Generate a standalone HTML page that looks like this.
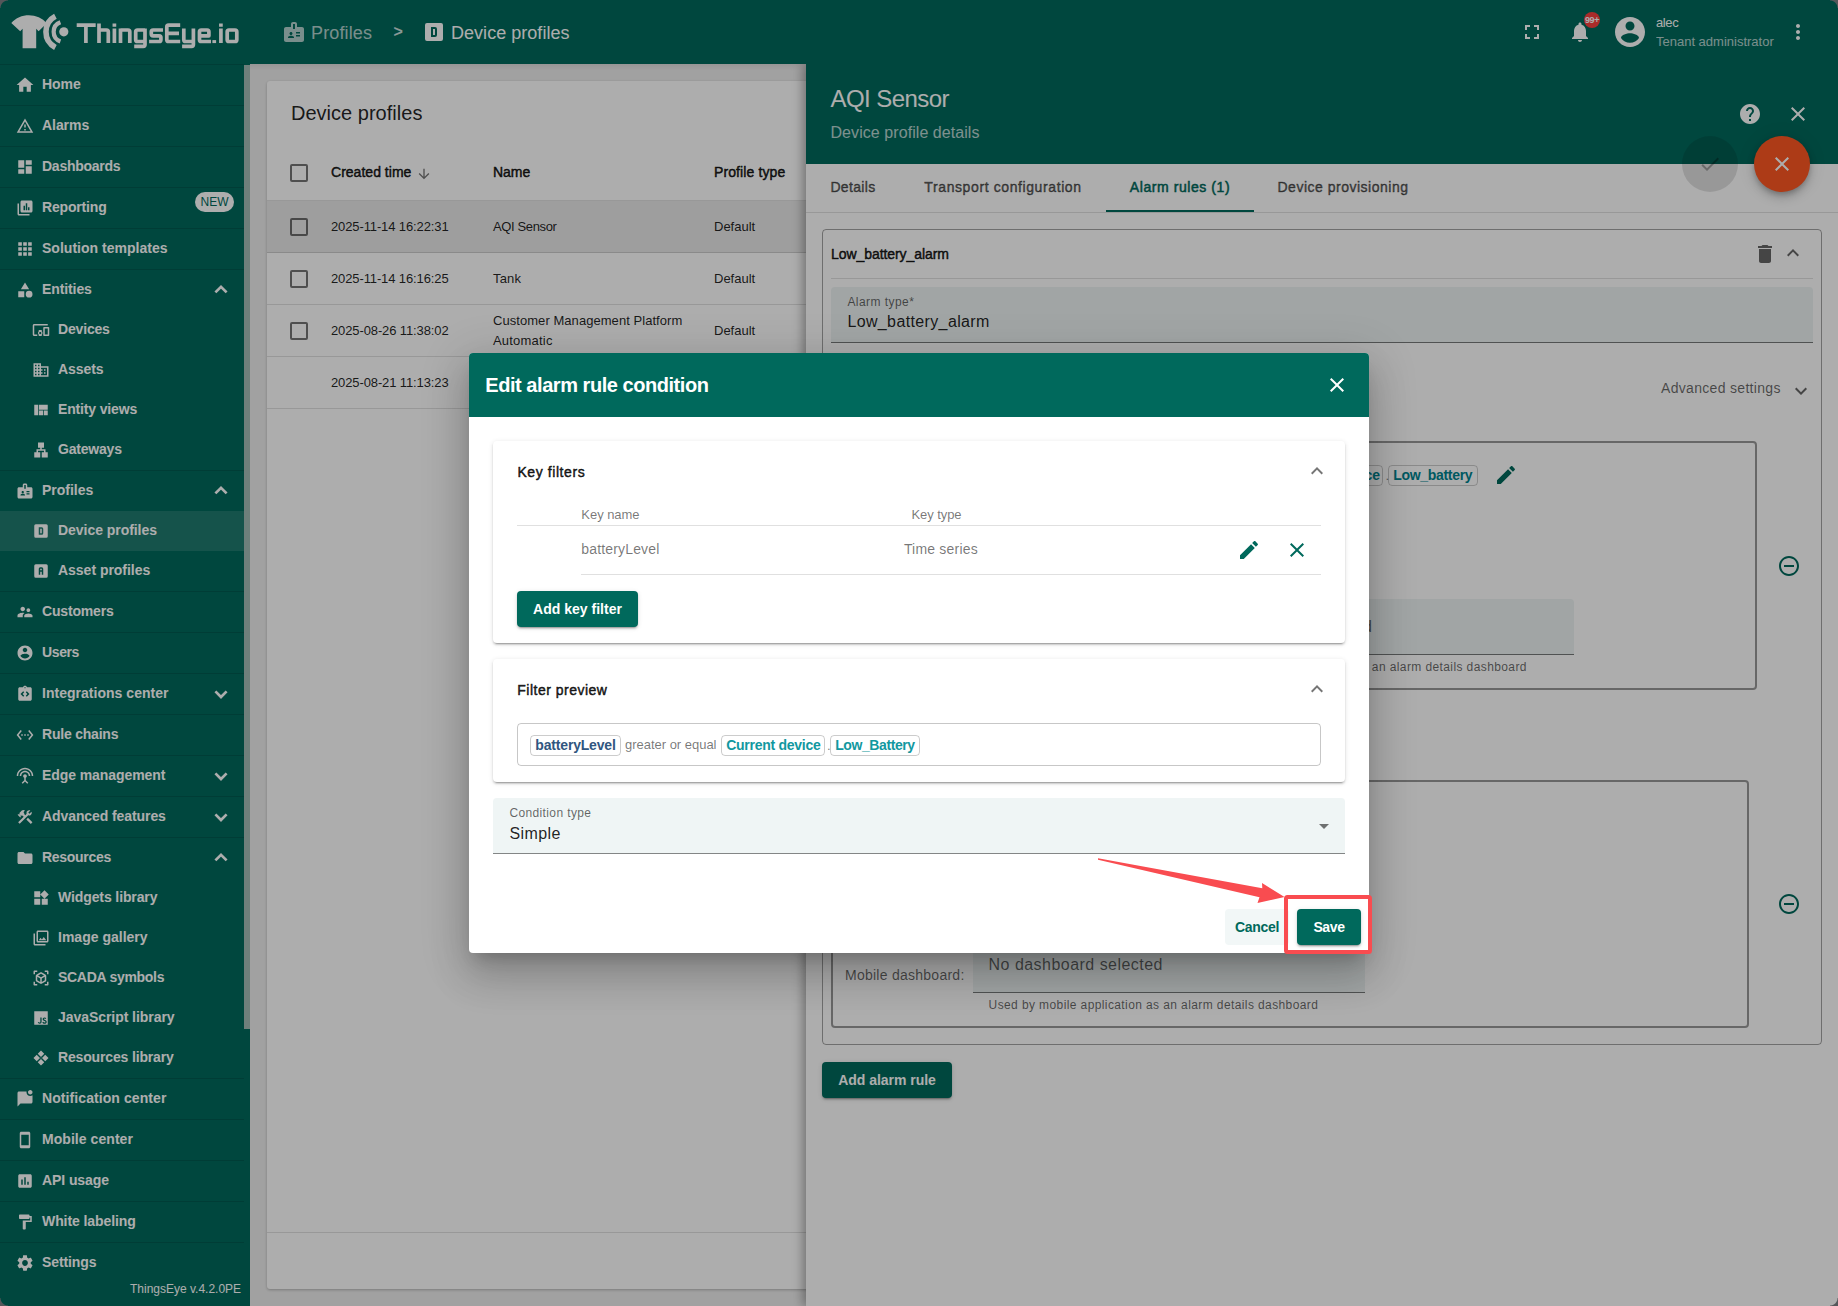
<!DOCTYPE html>
<html><head><meta charset="utf-8"><title>Device profiles</title>
<style>
*{box-sizing:border-box;margin:0;padding:0}
html,body{width:1838px;height:1306px;overflow:hidden;background:#eee;font-family:"Liberation Sans",sans-serif;}
.abs{position:absolute}
.t{position:absolute;white-space:nowrap;}
.b{font-weight:bold}
.md{font-weight:normal;-webkit-text-stroke:.5px currentColor}
svg{display:block}
.ic{position:absolute;fill:currentColor}
/* toolbar + sidebar */
#tb{z-index:3;left:0;top:0;width:1838px;height:64px;background:#00695c;color:#fff}
#sb{left:0;top:64px;width:250px;height:1242px;background:#00695c;color:#fff}
.mi{position:relative;height:41px;border-top:1px solid rgba(0,0,0,.13);width:244px}
.si{position:relative;height:40px;width:244px}
.mi .ic{left:16px;top:11px;width:18px;height:18px}
.si .ic{left:32px;top:11px;width:18px;height:18px}
.mi span,.si span{position:absolute;top:-1px;line-height:40px;font-size:14px;font-weight:bold;white-space:nowrap}
.mi span{left:42px}.si span{left:58px}
.chev{position:absolute;left:212px;top:10px;width:18px;height:18px;fill:none;stroke:#fff;stroke-width:2.7}
.sel{background:rgba(255,255,255,.12)}
/* main */
#main{left:250px;top:64px;width:1588px;height:1242px;background:#eee}
#card{left:17px;top:17px;width:1560px;height:1208px;background:#fff;border-radius:3px;box-shadow:0 1px 3px rgba(0,0,0,.25);color:rgba(0,0,0,.87)}
.cb{position:absolute;width:18px;height:18px;border:2px solid rgba(0,0,0,.54);border-radius:2px}
.row{position:absolute;left:0;width:1560px;height:52px;border-bottom:1px solid rgba(0,0,0,.12)}
.c13{font-size:13px;line-height:20px}
/* drawer */
#dr{left:806px;top:64px;width:1032px;height:1242px;background:#fff;box-shadow:-3px 0 10px rgba(0,0,0,.35);color:rgba(0,0,0,.87)}
#drh{left:0;top:0;width:1032px;height:100px;background:#00695c;color:#fff}
.tab{position:absolute;top:100px;height:48px;line-height:47px;font-size:14px;font-weight:normal;-webkit-text-stroke:.5px currentColor;color:rgba(0,0,0,.6);text-align:center;white-space:nowrap}
.fld{position:absolute;background:#eef4f4;border-bottom:1px solid rgba(0,0,0,.5);border-radius:4px 4px 0 0}
.box{position:absolute;border:2px solid rgba(0,0,0,.4);border-radius:4px}
.chip{position:absolute;border:1px solid rgba(0,0,0,.2);border-radius:4px;height:21px;line-height:18px;font-size:14px;font-weight:bold;white-space:nowrap;text-align:center}
.btn{position:absolute;height:36px;line-height:36px;border-radius:4px;background:#00695c;color:#fff;font-size:14px;font-weight:bold;text-align:center;white-space:nowrap;box-shadow:0 3px 1px -2px rgba(0,0,0,.2),0 2px 2px 0 rgba(0,0,0,.14),0 1px 5px 0 rgba(0,0,0,.12)}
/* overlay + dialog */
#ov{z-index:10;left:0;top:0;width:1838px;height:1306px;background:rgba(0,0,0,.32)}
#dlg{z-index:11;left:469px;top:353px;width:900px;height:600px;background:#fff;border-radius:4px;box-shadow:0 11px 15px -7px rgba(0,0,0,.2),0 24px 38px 3px rgba(0,0,0,.14),0 9px 46px 8px rgba(0,0,0,.12);color:rgba(0,0,0,.87)}
#dlgh{left:0;top:0;width:900px;height:64px;background:#00695c;border-radius:4px 4px 0 0;color:#fff}
.pan{position:absolute;left:24px;width:852px;background:#fff;border-radius:4px;box-shadow:0 3px 1px -2px rgba(0,0,0,.2),0 2px 2px 0 rgba(0,0,0,.14),0 1px 5px 0 rgba(0,0,0,.12)}
.hl{position:absolute;height:1px;background:rgba(0,0,0,.12)}
.g{color:rgba(0,0,0,.54)}
</style></head>
<body>
<!-- ================= TOOLBAR ================= -->
<div id="tb" class="abs">
  <svg class="abs" style="left:8px;top:10px" width="64" height="44" viewBox="8 10 64 44">
    <path fill="#fff" d="M11.3 23 C20 12.5 38 12.5 46.8 23.2 L38.6 31.2 L36.2 28.8 L36.2 48.2 L22.6 48.2 L22.6 28.8 L20.2 31.2 Z"/>
    <path fill="none" stroke="#fff" stroke-width="5.6" d="M55.4 16.2 A17.6 17.6 0 0 0 55.4 47.4"/>
    <path fill="none" stroke="#fff" stroke-width="4.2" d="M60.4 22.2 A10.2 10.2 0 0 0 60.4 41.4"/>
    <circle cx="63.8" cy="31.8" r="4.6" fill="#fff"/>
  </svg>
  <svg class="abs" style="left:70px;top:12px" width="180" height="44" viewBox="70 12 180 44" fill="none" stroke="#fff" stroke-width="3.700" stroke-linejoin="round">
   <path d="M76.700 25.100H95.700M85.900 25.100V43.100"/>
   <path d="M99 23.500V43.100M99 30H106.500Q108.300 30 108.300 31.800V43.100"/>
   <path d="M114.400 23.500V26.700M114.400 28.400V43.100"/>
   <path d="M120.500 43.100V28.400M120.500 30H128Q129.800 30 129.800 31.800V43.100"/>
   <path d="M145 30H137.500Q135.700 30 135.700 31.800V39.700Q135.700 41.500 137.500 41.500H145M145 28.400V44.500Q145 46.300 143.200 46.300H134.200"/>
   <path d="M163 30H153.100Q151.300 30 151.300 31.800V34Q151.300 35.800 153.100 35.800H159.100Q160.900 35.800 160.900 37.600V39.700Q160.900 41.500 159.100 41.500H149.100"/>
   <path d="M180.200 25.100H168.600Q166.800 25.100 166.800 26.900V39.700Q166.800 41.500 168.600 41.500H180.200M166.800 33.300H179"/>
   <path d="M183.800 28.400V39.700Q183.800 41.500 185.600 41.500H193.400M193.400 28.400V44.500Q193.400 46.300 191.600 46.300H182.100"/>
   <path d="M199.500 35.800H208.900V31.800Q208.900 30 207.100 30H201.300Q199.500 30 199.500 31.800V39.700Q199.500 41.500 201.300 41.500H211"/>
   <path d="M214.250 40.100V43.100"/>
   <path d="M220.900 23.500V26.700M220.900 28.400V43.100"/>
   <path d="M229 30H235Q236.800 30 236.800 31.800V39.700Q236.800 41.500 235 41.500H229Q227.200 41.500 227.200 39.700V31.800Q227.200 30 229 30Z"/>
  </svg>
  <!-- breadcrumb -->
  <svg class="ic" style="left:282px;top:20px;width:24px;height:24px;opacity:.7" viewBox="0 0 24 24"><path fill-rule="evenodd" d="M20 7h-5V4c0-1.100-.9-2-2-2h-2c-1.100 0-2 .9-2 2v3H4c-1.100 0-2 .9-2 2v11c0 1.100.9 2 2 2h16c1.100 0 2-.9 2-2V9c0-1.100-.9-2-2-2zM9 12c.830 0 1.500.670 1.500 1.500S9.830 15 9 15s-1.500-.670-1.500-1.500S8.170 12 9 12zm3 6H6v-.750c0-1 2-1.500 3-1.500s3 .5 3 1.500V18zm1-9h-2V4h2v5zm5 7.500h-4V15h4v1.500zm0-3h-4V12h4v1.500z"/></svg>
  <div class="t" style="letter-spacing:0.138px;left:311px;top:15px;line-height:36px;font-size:18px;opacity:.7">Profiles</div>
  <div class="t" style="left:393.500px;top:13.500px;line-height:36px;font-size:16px;opacity:.8;font-weight:bold">&gt;</div>
  <svg class="ic" style="left:422px;top:20px;width:24px;height:24px" viewBox="0 0 24 24"><path fill-rule="evenodd" d="M5 3h14a2 2 0 0 1 2 2v14a2 2 0 0 1-2 2H5a2 2 0 0 1-2-2V5a2 2 0 0 1 2-2zM9 7v10h4a2 2 0 0 0 2-2V9a2 2 0 0 0-2-2H9zm2 2h2v6h-2V9z"/></svg>
  <div class="t" style="letter-spacing:0.032px;left:451px;top:15px;line-height:36px;font-size:18px">Device profiles</div>
  <!-- right icons -->
  <svg class="ic" style="left:1520px;top:20px;width:24px;height:24px" viewBox="0 0 24 24"><path d="M7 14H5v5h5v-2H7v-3zm-2-4h2V7h3V5H5v5zm12 7h-3v2h5v-5h-2v3zM14 5v2h3v3h2V5h-5z"/></svg>
  <svg class="ic" style="left:1568px;top:20px;width:24px;height:24px" viewBox="0 0 24 24"><path d="M12 22c1.100 0 2-.9 2-2h-4c0 1.100.890 2 2 2zm6-6v-5c0-3.070-1.640-5.640-4.500-6.320V4c0-.830-.670-1.500-1.500-1.500s-1.500.670-1.500 1.500v.680C7.630 5.360 6 7.920 6 11v5l-2 2v1h16v-1l-2-2z"/></svg>
  <div class="abs" style="left:1584px;top:12px;width:16px;height:16px;border-radius:8px;background:#f9403f"></div>
  <div class="t b" style="left:1584px;top:12px;width:16px;line-height:16px;font-size:9px;text-align:center;letter-spacing:-.4px">99+</div>
  <svg class="ic" style="left:1612px;top:14px;width:36px;height:36px" viewBox="0 0 24 24"><path d="M12 2C6.480 2 2 6.480 2 12s4.480 10 10 10 10-4.480 10-10S17.520 2 12 2zm0 3c1.660 0 3 1.340 3 3s-1.340 3-3 3-3-1.340-3-3 1.340-3 3-3zm0 14.200c-2.500 0-4.710-1.280-6-3.220.030-1.990 4-3.080 6-3.080 1.990 0 5.970 1.090 6 3.080-1.290 1.940-3.500 3.220-6 3.220z"/></svg>
  <div class="t" style="letter-spacing:-0.386px;left:1656px;top:13px;line-height:20px;font-size:13px">alec</div>
  <div class="t" style="letter-spacing:-0.004px;left:1656px;top:32px;line-height:20px;font-size:13px;opacity:.7">Tenant administrator</div>
  <svg class="ic" style="left:1786px;top:20px;width:24px;height:24px" viewBox="0 0 24 24"><path d="M12 8c1.100 0 2-.9 2-2s-.9-2-2-2-2 .9-2 2 .9 2 2 2zm0 2c-1.100 0-2 .9-2 2s.9 2 2 2 2-.9 2-2-.9-2-2-2zm0 6c-1.100 0-2 .9-2 2s.9 2 2 2 2-.9 2-2-.9-2-2-2z"/></svg>
</div>
<!-- ================= SIDEBAR ================= -->
<div id="sb" class="abs">
<!--SIDEBAR-->
<div class="mi"><svg class="ic" style="transform:scale(1.12)" viewBox="0 0 24 24"><path d="M10 20v-6h4v6h5v-8h3L12 3 2 12h3v8z"/></svg><span style="letter-spacing:-0.035px">Home</span></div>
<div class="mi"><svg class="ic" viewBox="0 0 24 24"><path d="M12 5.990L19.530 19H4.470L12 5.990M12 2L1 21h22L12 2zm1 14h-2v2h2v-2zm0-6h-2v4h2v-4z"/></svg><span style="letter-spacing:-0.054px">Alarms</span></div>
<div class="mi"><svg class="ic" viewBox="0 0 24 24"><path d="M3 13h8V3H3v10zm0 8h8v-6H3v6zm10 0h8V11h-8v10zm0-18v6h8V3h-8z"/></svg><span style="letter-spacing:-0.258px">Dashboards</span></div>
<div class="mi"><svg class="ic" viewBox="0 0 24 24"><path fill-rule="evenodd" d="M4 6H2v14c0 1.100.9 2 2 2h14v-2H4V6z M20 2H8c-1.100 0-2 .9-2 2v12c0 1.100.9 2 2 2h12c1.100 0 2-.9 2-2V4c0-1.100-.9-2-2-2z M10 9h2v6h-2z M13 5.500h2V15h-2z M16 11h2v4h-2z"/></svg><span style="letter-spacing:-0.176px">Reporting</span><div class="abs" style="left:195px;top:4px;width:39px;height:20px;border-radius:10px;background:#fff;color:#00695c;font-size:12px;line-height:20px;text-align:center">NEW</div></div>
<div class="mi"><svg class="ic" viewBox="0 0 24 24"><path d="M3.0 3.0h4.800v4.800h-4.800zM9.6 3.0h4.800v4.800h-4.800zM16.2 3.0h4.800v4.800h-4.800zM3.0 9.6h4.800v4.800h-4.800zM9.6 9.6h4.800v4.800h-4.800zM16.2 9.6h4.800v4.800h-4.800zM3.0 16.2h4.800v4.800h-4.800zM9.6 16.2h4.800v4.800h-4.800zM16.2 16.2h4.800v4.800h-4.800z"/></svg><span style="letter-spacing:0.016px">Solution templates</span></div>
<div class="mi"><svg class="ic" viewBox="0 0 24 24"><path d="M12 2l-5.500 9h11z M17.500 13a4.500 4.500 0 1 0 0 9 4.500 4.500 0 0 0 0-9z M3 13.500h8v8H3z"/></svg><span style="letter-spacing:-0.097px">Entities</span><svg class="chev" viewBox="0 0 18 18"><path d="M3.400 12.400 L9 6.800 L14.600 12.400"/></svg></div>
<div class="si"><svg class="ic" viewBox="0 0 24 24"><path d="M3 6h18V4H3c-1.100 0-2 .9-2 2v12c0 1.100.9 2 2 2h4v-2H3V6zm10 6H9v1.780c-.610.550-1 1.330-1 2.220s.390 1.670 1 2.220V20h4v-1.780c.610-.550 1-1.340 1-2.220s-.390-1.670-1-2.220V12zm-2 5.500c-.830 0-1.500-.670-1.500-1.500s.670-1.500 1.500-1.500 1.500.670 1.500 1.500-.670 1.500-1.500 1.500zM22 8h-6c-.5 0-1 .5-1 1v10c0 .5.5 1 1 1h6c.5 0 1-.5 1-1V9c0-.5-.5-1-1-1zm-1 10h-4v-8h4v8z"/></svg><span style="letter-spacing:-0.173px">Devices</span></div>
<div class="si"><svg class="ic" viewBox="0 0 24 24"><path d="M12 7V3H2v18h20V7H12zM6 19H4v-2h2v2zm0-4H4v-2h2v2zm0-4H4V9h2v2zm0-4H4V5h2v2zm4 12H8v-2h2v2zm0-4H8v-2h2v2zm0-4H8V9h2v2zm0-4H8V5h2v2zm10 12h-8v-2h2v-2h-2v-2h2v-2h-2V9h8v10zm-2-8h-2v2h2v-2zm0 4h-2v2h2v-2z"/></svg><span style="letter-spacing:-0.084px">Assets</span></div>
<div class="si"><svg class="ic" viewBox="0 0 24 24"><path d="M21 5v6.500H9.330V5H21zm-6.330 14v-6.500H9.330V19h5.340zm1-6.500V19H21v-6.500h-5.330zM8.330 19V5H3v14h5.330z"/></svg><span style="letter-spacing:-0.157px">Entity views</span></div>
<div class="si"><svg class="ic" viewBox="0 0 24 24"><path d="M13 22h8v-7h-3v-4h-5V9h3V2H8v7h3v2H6v4H3v7h8v-7H8v-2h8v2h-3z"/></svg><span style="letter-spacing:-0.196px">Gateways</span></div>
<div class="mi"><svg class="ic" viewBox="0 0 24 24"><path d="M20 7h-5V4c0-1.100-.9-2-2-2h-2c-1.100 0-2 .9-2 2v3H4c-1.100 0-2 .9-2 2v11c0 1.100.9 2 2 2h16c1.100 0 2-.9 2-2V9c0-1.100-.9-2-2-2zM9 12c.830 0 1.500.670 1.500 1.500S9.830 15 9 15s-1.500-.670-1.500-1.500S8.170 12 9 12zm3 6H6v-.750c0-1 2-1.500 3-1.500s3 .5 3 1.500V18zm1-9h-2V4h2v5zm5 7.500h-4V15h4v1.500zm0-3h-4V12h4v1.500z"/></svg><span style="letter-spacing:-0.023px">Profiles</span><svg class="chev" viewBox="0 0 18 18"><path d="M3.400 12.400 L9 6.800 L14.600 12.400"/></svg></div>
<div class="si sel"><svg class="ic" viewBox="0 0 24 24"><path fill-rule="evenodd" d="M5 3h14a2 2 0 0 1 2 2v14a2 2 0 0 1-2 2H5a2 2 0 0 1-2-2V5a2 2 0 0 1 2-2zM9 7v10h4a2 2 0 0 0 2-2V9a2 2 0 0 0-2-2H9zm2 2h2v6h-2V9z"/></svg><span style="letter-spacing:-0.044px">Device profiles</span></div>
<div class="si"><svg class="ic" viewBox="0 0 24 24"><path fill-rule="evenodd" d="M5 3h14a2 2 0 0 1 2 2v14a2 2 0 0 1-2 2H5a2 2 0 0 1-2-2V5a2 2 0 0 1 2-2zM11 7a2 2 0 0 0-2 2v8h2v-4h2v4h2V9a2 2 0 0 0-2-2h-2zm0 2h2v2h-2V9z"/></svg><span style="letter-spacing:-0.023px">Asset profiles</span></div>
<div class="mi"><svg class="ic" viewBox="0 0 24 24"><path d="M16.500 12c1.380 0 2.490-1.120 2.490-2.500S17.880 7 16.500 7C15.120 7 14 8.120 14 9.500s1.120 2.500 2.500 2.500zM9 11c1.660 0 2.990-1.340 2.990-3S10.660 5 9 5C7.340 5 6 6.340 6 8s1.340 3 3 3zm7.500 3c-1.830 0-5.500.920-5.500 2.750V19h11v-2.250c0-1.830-3.670-2.750-5.500-2.750zM9 13c-2.330 0-7 1.170-7 3.500V19h7v-2.250c0-.850.330-2.340 2.370-3.470C10.500 13.100 9.660 13 9 13z"/></svg><span style="letter-spacing:-0.168px">Customers</span></div>
<div class="mi"><svg class="ic" viewBox="0 0 24 24"><path d="M12 2C6.480 2 2 6.480 2 12s4.480 10 10 10 10-4.480 10-10S17.520 2 12 2zm0 3c1.660 0 3 1.340 3 3s-1.340 3-3 3-3-1.340-3-3 1.340-3 3-3zm0 14.200c-2.500 0-4.710-1.280-6-3.220.030-1.990 4-3.080 6-3.080 1.990 0 5.970 1.090 6 3.080-1.290 1.940-3.500 3.220-6 3.220z"/></svg><span style="letter-spacing:-0.380px">Users</span></div>
<div class="mi"><svg class="ic" viewBox="0 0 24 24"><path d="M19 3h-4.180C14.400 1.840 13.300 1 12 1s-2.400.840-2.820 2H5c-1.100 0-2 .9-2 2v14c0 1.100.9 2 2 2h14c1.100 0 2-.9 2-2V5c0-1.100-.9-2-2-2zM11 14.170l-1.410 1.420L6 12l3.590-3.590L11 9.830 8.830 12 11 14.170zm1-9.920c-.410 0-.750-.340-.750-.750s.340-.750.750-.750.750.340.750.750-.340.750-.750.750zm2.410 11.340L13 14.170 15.170 12 13 9.830l1.410-1.420L18 12l-3.590 3.590z"/></svg><span style="letter-spacing:0.026px">Integrations center</span><svg class="chev" viewBox="0 0 18 18"><path d="M3.400 7.400 L9 13 L14.600 7.400"/></svg></div>
<div class="mi"><svg class="ic" viewBox="0 0 24 24"><path d="M7.770 6.760L6.230 5.480.820 12l5.410 6.520 1.540-1.280L3.420 12l4.350-5.240zM7 13h2v-2H7v2zm10-2h-2v2h2v-2zm-6 2h2v-2h-2v2zm6.770-7.520l-1.540 1.280L20.580 12l-4.350 5.240 1.540 1.280L23.180 12l-5.410-6.520z"/></svg><span style="letter-spacing:-0.209px">Rule chains</span></div>
<div class="mi"><svg class="ic" viewBox="0 0 24 24"><path d="M12 5c-3.870 0-7 3.130-7 7h2c0-2.760 2.240-5 5-5s5 2.240 5 5h2c0-3.870-3.130-7-7-7zm1 9.290c.880-.390 1.500-1.260 1.500-2.290 0-1.380-1.120-2.500-2.500-2.500S9.500 10.620 9.500 12c0 1.020.620 1.900 1.500 2.290v3.300L7.590 21 9 22.410l3-3 3 3L16.410 21 13 17.590v-3.300zM12 1C5.930 1 1 5.930 1 12h2c0-4.970 4.030-9 9-9s9 4.030 9 9h2c0-6.070-4.930-11-11-11z"/></svg><span style="letter-spacing:-0.077px">Edge management</span><svg class="chev" viewBox="0 0 18 18"><path d="M3.400 7.400 L9 13 L14.600 7.400"/></svg></div>
<div class="mi"><svg class="ic" viewBox="0 0 24 24"><path d="M13.783 15.172l2.121-2.121 5.996 5.996-2.121 2.121zM17.500 10c1.930 0 3.500-1.570 3.500-3.500 0-.580-.160-1.120-.410-1.600l-2.700 2.700-1.490-1.490 2.700-2.700c-.480-.250-1.020-.410-1.600-.410C15.570 3 14 4.570 14 6.500c0 .410.080.800.210 1.160l-1.850 1.850-1.780-1.780.710-.710-1.410-1.410L12 3.490c-1.170-1.170-3.070-1.170-4.240 0L4.220 7.030l1.410 1.410H2.810l-.710.710 3.540 3.540.710-.710V9.150l1.410 1.410.710-.710 1.780 1.780-7.410 7.410 2.120 2.120L16.340 9.790c.360.130.750.210 1.160.210z"/></svg><span style="letter-spacing:-0.086px">Advanced features</span><svg class="chev" viewBox="0 0 18 18"><path d="M3.400 7.400 L9 13 L14.600 7.400"/></svg></div>
<div class="mi"><svg class="ic" viewBox="0 0 24 24"><path d="M10 4H4c-1.100 0-1.990.9-1.990 2L2 18c0 1.100.9 2 2 2h16c1.100 0 2-.9 2-2V8c0-1.100-.9-2-2-2h-8l-2-2z"/></svg><span style="letter-spacing:-0.287px">Resources</span><svg class="chev" viewBox="0 0 18 18"><path d="M3.400 12.400 L9 6.800 L14.600 12.400"/></svg></div>
<div class="si"><svg class="ic" viewBox="0 0 24 24"><path d="M13 13v8h8v-8h-8zM3 21h8v-8H3v8zM3 3v8h8V3H3zm13.660-1.310L11 7.340 16.660 13l5.660-5.660-5.660-5.650z"/></svg><span style="letter-spacing:-0.108px">Widgets library</span></div>
<div class="si"><svg class="ic" viewBox="0 0 24 24"><path d="M20 4v12H8V4h12m0-2H8c-1.100 0-2 .9-2 2v12c0 1.100.9 2 2 2h12c1.100 0 2-.9 2-2V4c0-1.100-.9-2-2-2zm-8.500 9.670l1.690 2.260 2.480-3.100L19 15H9l2.500-3.330zM2 6v14c0 1.100.9 2 2 2h14v-2H4V6H2z"/></svg><span style="letter-spacing:0.008px">Image gallery</span></div>
<div class="si"><svg class="ic" viewBox="0 0 24 24"><path d="M18.250 7.600l-5.500-3.180c-.460-.270-1.040-.270-1.500 0L5.750 7.600c-.460.270-.750.760-.750 1.300v6.350c0 .540.290 1.030.750 1.300l5.500 3.180c.460.270 1.040.270 1.500 0l5.500-3.180c.460-.270.750-.760.750-1.300V8.900c0-.540-.290-1.030-.750-1.300zM7 14.960v-4.620l4 2.320v4.610l-4-2.310zm5-4.030L8 8.610l4-2.310 4 2.310-4 2.320zm1 6.340v-4.610l4-2.320v4.620l-4 2.310zM7 2H3.500C2.670 2 2 2.670 2 3.500V7h2V4h3V2zm10 0h3.500c.830 0 1.500.670 1.500 1.500V7h-2V4h-3V2zM7 22H3.500c-.830 0-1.500-.670-1.500-1.500V17h2v3h3v2zm10 0h3.500c.830 0 1.500-.670 1.500-1.500V17h-2v3h-3v2z"/></svg><span style="letter-spacing:-0.288px">SCADA symbols</span></div>
<div class="si"><svg class="ic" viewBox="0 0 24 24"><path fill-rule="evenodd" d="M3 3h18v18H3V3zm4.730 15.040c.4.850 1.190 1.550 2.540 1.550 1.500 0 2.530-.8 2.530-2.550v-5.780h-1.700V17c0 .860-.350 1.080-.9 1.080-.580 0-.820-.4-1.090-.870l-1.380.830zm5.980-.180c.5.980 1.510 1.730 3.090 1.730 1.600 0 2.800-.830 2.800-2.360 0-1.410-.810-2.040-2.250-2.660l-.420-.180c-.730-.310-1.040-.520-1.040-1.020 0-.410.310-.730.810-.730.480 0 .8.210 1.090.730l1.310-.870c-.550-.960-1.330-1.330-2.400-1.330-1.510 0-2.480.960-2.480 2.230 0 1.380.810 2.030 2.030 2.550l.420.180c.780.340 1.240.550 1.240 1.130 0 .480-.450.830-1.150.830-.830 0-1.310-.430-1.670-1.030l-1.380.8z"/></svg><span style="letter-spacing:-0.054px">JavaScript library</span></div>
<div class="si"><svg class="ic" viewBox="0 0 24 24"><path d="M12.00 1.98L16.35 6.33L12.00 10.68L7.65 6.33ZM6.33 7.65L10.68 12.00L6.33 16.35L1.98 12.00ZM17.67 7.65L22.02 12.00L17.67 16.35L13.32 12.00ZM12.00 13.32L16.35 17.67L12.00 22.02L7.65 17.67ZM12.00 11.25L12.75 12.00L12.00 12.75L11.25 12.00Z"/></svg><span style="letter-spacing:-0.156px">Resources library</span></div>
<div class="mi"><svg class="ic" viewBox="0 0 24 24"><path d="M22 6.980V16c0 1.100-.9 2-2 2H6l-4 4V4c0-1.100.9-2 2-2h10.100c-.060.320-.1.660-.1 1 0 2.760 2.240 5 5 5 1.130 0 2.160-.390 3-1.020zM16 3c0 1.660 1.340 3 3 3s3-1.340 3-3-1.340-3-3-3-3 1.340-3 3z"/></svg><span style="letter-spacing:0.083px">Notification center</span></div>
<div class="mi"><svg class="ic" viewBox="0 0 24 24"><path d="M17 1.010L7 1c-1.100 0-2 .9-2 2v18c0 1.100.9 2 2 2h10c1.100 0 2-.9 2-2V3c0-1.100-.9-1.990-2-1.990zM17 19H7V5h10v14z"/></svg><span style="letter-spacing:0.054px">Mobile center</span></div>
<div class="mi"><svg class="ic" viewBox="0 0 24 24"><path d="M19 3H5c-1.100 0-2 .9-2 2v14c0 1.100.9 2 2 2h14c1.100 0 2-.9 2-2V5c0-1.100-.9-2-2-2zM9 17H7v-7h2v7zm4 0h-2V7h2v10zm4 0h-2v-4h2v4z"/></svg><span style="letter-spacing:-0.088px">API usage</span></div>
<div class="mi"><svg class="ic" viewBox="0 0 24 24"><path d="M18 4V3c0-.550-.450-1-1-1H5c-.550 0-1 .450-1 1v4c0 .550.450 1 1 1h12c.550 0 1-.450 1-1V6h1v4H9v11c0 .550.450 1 1 1h2c.550 0 1-.450 1-1v-9h8V4h-3z"/></svg><span style="letter-spacing:-0.076px">White labeling</span></div>
<div class="mi"><svg class="ic" style="transform:scale(1.07)" viewBox="0 0 24 24"><path d="M19.140 12.940c.040-.3.060-.610.060-.940 0-.320-.020-.640-.070-.940l2.030-1.580c.180-.140.230-.410.120-.610l-1.920-3.320c-.120-.220-.370-.290-.590-.220l-2.390.960c-.5-.380-1.030-.7-1.620-.940l-.360-2.540c-.040-.240-.240-.410-.480-.410h-3.840c-.240 0-.430.170-.470.410l-.360 2.540c-.590.240-1.130.570-1.620.940l-2.390-.960c-.220-.080-.470 0-.590.220L2.740 8.870c-.120.210-.080.470.120.610l2.030 1.580c-.050.3-.090.630-.090.940s.020.640.070.940l-2.030 1.580c-.180.140-.230.410-.120.610l1.920 3.320c.120.220.370.290.590.220l2.390-.960c.5.380 1.030.7 1.620.940l.360 2.540c.050.240.240.410.480.410h3.840c.240 0 .440-.170.470-.410l.360-2.540c.590-.240 1.130-.560 1.620-.940l2.390.960c.220.080.470 0 .590-.220l1.920-3.320c.120-.220.070-.470-.120-.610l-2.010-1.580zM12 15.600c-1.980 0-3.600-1.620-3.600-3.600s1.620-3.600 3.600-3.600 3.600 1.620 3.600 3.600-1.620 3.600-3.600 3.600z"/></svg><span style="letter-spacing:-0.105px">Settings</span></div>
<div class="t" style="letter-spacing:-0.004px;left:130px;top:1215px;line-height:20px;font-size:12px">ThingsEye v.4.2.0PE</div>
<div class="abs" style="left:244px;top:1px;width:6px;height:964px;background:#a3bcb6"></div>
<!--/SIDEBAR-->
</div>
<!--MAIN-->
<div id="main" class="abs">
 <div class="abs" style="left:0;top:0;width:1588px;height:7px;background:linear-gradient(rgba(0,0,0,.07),rgba(0,0,0,0))"></div>
 <div id="card" class="abs">
  <div class="t" style="letter-spacing:0.016px;left:24px;top:16px;line-height:32px;font-size:20px">Device profiles</div>
  <div class="cb" style="left:23px;top:83px"></div>
  <div class="t md" style="letter-spacing:0.022px;left:64px;top:81px;line-height:20px;font-size:14px">Created time</div>
  <svg class="ic" style="left:149px;top:84.500px;width:16px;height:16px;color:rgba(0,0,0,.54)" viewBox="0 0 24 24"><path d="M20 12l-1.410-1.410L13 16.170V4h-2v12.170l-5.580-5.590L4 12l8 8 8-8z"/></svg>
  <div class="t md" style="letter-spacing:-0.053px;left:226px;top:81px;line-height:20px;font-size:14px">Name</div>
  <div class="t md" style="letter-spacing:0.105px;left:447px;top:81px;line-height:20px;font-size:14px">Profile type</div>
  <div class="hl" style="left:0;top:119px;width:1560px"></div>
  <div class="row" style="top:120px;background:#e9e9e9">
    <div class="cb" style="left:23px;top:17px"></div>
    <div class="t c13" style="letter-spacing:-0.119px;left:64px;top:16px">2025-11-14 16:22:31</div>
    <div class="t c13" style="letter-spacing:-0.367px;left:226px;top:16px">AQI Sensor</div>
    <div class="t c13" style="letter-spacing:-0.001px;left:447px;top:16px">Default</div>
  </div>
  <div class="row" style="top:172px">
    <div class="cb" style="left:23px;top:17px"></div>
    <div class="t c13" style="letter-spacing:-0.119px;left:64px;top:16px">2025-11-14 16:16:25</div>
    <div class="t c13" style="letter-spacing:0.144px;left:226px;top:16px">Tank</div>
    <div class="t c13" style="letter-spacing:-0.001px;left:447px;top:16px">Default</div>
  </div>
  <div class="row" style="top:224px">
    <div class="cb" style="left:23px;top:17px"></div>
    <div class="t c13" style="letter-spacing:-0.119px;left:64px;top:16px">2025-08-26 11:38:02</div>
    <div class="t c13" style="letter-spacing:0.053px;left:226px;top:6px">Customer Management Platform</div>
    <div class="t c13" style="letter-spacing:0.198px;left:226px;top:26px">Automatic</div>
    <div class="t c13" style="letter-spacing:-0.001px;left:447px;top:16px">Default</div>
  </div>
  <div class="row" style="top:276px">
    <div class="t c13" style="letter-spacing:-0.119px;left:64px;top:16px">2025-08-21 11:13:23</div>
  </div>
  <div class="hl" style="left:0;top:1151px;width:1560px"></div>
 </div>
</div>
<!--/MAIN-->
<!--DRAWER-->
<div id="dr" class="abs">
 <div id="drh" class="abs">
  <div class="t" style="letter-spacing:-0.562px;left:24.500px;top:19px;line-height:32px;font-size:24px">AQI Sensor</div>
  <div class="t" style="letter-spacing:0.065px;left:24.500px;top:56.500px;line-height:24px;font-size:16px;opacity:.72">Device profile details</div>
  <svg class="ic" style="left:932px;top:38px;width:24px;height:24px" viewBox="0 0 24 24"><path d="M12 2C6.480 2 2 6.480 2 12s4.480 10 10 10 10-4.480 10-10S17.520 2 12 2zm1 17h-2v-2h2v2zm2.070-7.750l-.9.920C13.450 12.900 13 13.500 13 15h-2v-.5c0-1.100.450-2.100 1.170-2.830l1.240-1.260c.370-.360.590-.860.590-1.410 0-1.100-.9-2-2-2s-2 .9-2 2H8c0-2.210 1.790-4 4-4s4 1.790 4 4c0 .880-.360 1.680-.930 2.250z"/></svg>
  <svg class="ic" style="left:980px;top:38px;width:24px;height:24px" viewBox="0 0 24 24"><path d="M19 6.410L17.590 5 12 10.590 6.410 5 5 6.410 10.590 12 5 17.590 6.410 19 12 13.410 17.590 19 19 17.590 13.410 12z"/></svg>
 </div>
 <!-- tabs -->
 <div class="tab" style="left:0;width:94px"><span style="letter-spacing:0.351px">Details</span></div>
 <div class="tab" style="left:94px;width:206px"><span style="letter-spacing:0.602px">Transport configuration</span></div>
 <div class="tab" style="left:300px;width:148px;color:#00695c"><span style="letter-spacing:0.572px">Alarm rules (1)</span></div>
 <div class="tab" style="left:448px;width:178px"><span style="letter-spacing:0.505px">Device provisioning</span></div>
 <div class="hl" style="left:0;top:148px;width:1032px"></div>
 <div class="abs" style="left:300px;top:146px;width:148px;height:2px;background:#00695c"></div>
 <!-- FABs -->
 <div class="abs" style="left:876px;top:72px;width:56px;height:56px;border-radius:28px;background:rgba(0,0,0,.12)"></div>
 <svg class="ic" style="left:892px;top:88px;width:24px;height:24px;color:rgba(0,0,0,.3)" viewBox="0 0 24 24"><path d="M9 16.170L4.830 12l-1.420 1.410L9 19 21 7l-1.410-1.410z"/></svg>
 <div class="abs" style="left:948px;top:72px;width:56px;height:56px;border-radius:28px;background:#ff5722;box-shadow:0 3px 5px -1px rgba(0,0,0,.2),0 6px 10px 0 rgba(0,0,0,.14),0 1px 18px 0 rgba(0,0,0,.12)"></div>
 <svg class="ic" style="left:964px;top:88px;width:24px;height:24px;color:#fff" viewBox="0 0 24 24"><path d="M19 6.410L17.590 5 12 10.590 6.410 5 5 6.410 10.590 12 5 17.590 6.410 19 12 13.410 17.590 19 19 17.590 13.410 12z"/></svg>
 <!-- alarm card -->
 <div class="abs" style="left:16px;top:165px;width:1000px;height:816px;border:1px solid rgba(0,0,0,.36);border-radius:4px"></div>
 <div class="t md" style="letter-spacing:-0.066px;left:25px;top:180px;line-height:20px;font-size:14px">Low_battery_alarm</div>
 <svg class="ic" style="left:947px;top:178px;width:24px;height:24px;color:rgba(0,0,0,.6)" viewBox="0 0 24 24"><path d="M6 19c0 1.100.9 2 2 2h8c1.100 0 2-.9 2-2V7H6v12zM19 4h-3.500l-1-1h-5l-1 1H5v2h14V4z"/></svg>
 <svg class="ic" style="left:975px;top:176.600px;width:24px;height:24px;color:rgba(0,0,0,.6)" viewBox="0 0 24 24"><path d="M12 8l-6 6 1.410 1.410L12 10.830l4.590 4.580L18 14z"/></svg>
 <div class="hl" style="left:25px;top:214px;width:982px"></div>
 <div class="fld" style="left:25px;top:223px;width:982px;height:56px"></div>
 <div class="t" style="letter-spacing:0.447px;left:41.400px;top:229.600px;line-height:16px;font-size:12px;color:rgba(0,0,0,.6)">Alarm type*</div>
 <div class="t" style="letter-spacing:0.370px;left:41.400px;top:246px;line-height:24px;font-size:16px">Low_battery_alarm</div>
 <div class="t" style="letter-spacing:0.312px;left:855px;top:314px;line-height:20px;font-size:14px;color:rgba(0,0,0,.6)">Advanced settings</div>
 <svg class="ic" style="left:983px;top:314.700px;width:24px;height:24px;color:rgba(0,0,0,.6)" viewBox="0 0 24 24"><path d="M16.590 8.590L12 13.170 7.410 8.590 6 10l6 6 6-6z"/></svg>
 <!-- box 1 -->
 <div class="box" style="left:25px;top:377px;width:926px;height:249px"></div>
 <div class="chip" style="left:473px;top:401px;width:104px;color:#00838f">Current device</div>
 <div class="t" style="left:579.500px;top:402px;line-height:20px;font-size:13px;color:rgba(0,0,0,.54)">.</div>
 <div class="chip" style="left:582px;top:401px;width:89.500px;color:#00838f"><span style="letter-spacing:-0.297px">Low_battery</span></div>
 <svg class="ic" style="left:687.600px;top:399px;width:24px;height:24px;color:#00695c" viewBox="0 0 24 24"><path d="M3 17.250V21h3.750L17.810 9.940l-3.750-3.750L3 17.250zM20.710 7.040c.390-.390.390-1.020 0-1.410l-2.340-2.340c-.390-.390-1.020-.390-1.410 0l-1.830 1.830 3.750 3.750 1.830-1.830z"/></svg>
 <div class="fld" style="left:376px;top:535px;width:392px;height:56px"></div>
 <div class="t" style="letter-spacing:0.472px;left:392px;top:551px;line-height:24px;font-size:16px;color:rgba(0,0,0,.6)">No dashboard selected</div>
 <div class="t" style="letter-spacing:0.396px;left:391.200px;top:595px;line-height:16px;font-size:12px;color:rgba(0,0,0,.6)">Used by mobile application as an alarm details dashboard</div>
 <svg class="ic" style="left:971px;top:490px;width:24px;height:24px;color:#00695c" viewBox="0 0 24 24"><path d="M7 11v2h10v-2H7zm5-9C6.480 2 2 6.480 2 12s4.480 10 10 10 10-4.480 10-10S17.520 2 12 2zm0 18c-4.410 0-8-3.590-8-8s3.590-8 8-8 8 3.590 8 8-3.590 8-8 8z"/></svg>
 <!-- box 2 -->
 <div class="box" style="left:25px;top:716px;width:918px;height:248px"></div>
 <div class="t" style="letter-spacing:0.257px;left:39px;top:901px;line-height:20px;font-size:14px;color:rgba(0,0,0,.6)">Mobile dashboard:</div>
 <div class="fld" style="left:167px;top:873px;width:392px;height:56px"></div>
 <div class="t" style="letter-spacing:0.467px;left:182.600px;top:888.700px;line-height:24px;font-size:16px;color:rgba(0,0,0,.6)">No dashboard selected</div>
 <div class="t" style="letter-spacing:0.396px;left:182.600px;top:933px;line-height:16px;font-size:12px;color:rgba(0,0,0,.6)">Used by mobile application as an alarm details dashboard</div>
 <svg class="ic" style="left:971px;top:828px;width:24px;height:24px;color:#00695c" viewBox="0 0 24 24"><path d="M7 11v2h10v-2H7zm5-9C6.480 2 2 6.480 2 12s4.480 10 10 10 10-4.480 10-10S17.520 2 12 2zm0 18c-4.410 0-8-3.590-8-8s3.590-8 8-8 8 3.590 8 8-3.590 8-8 8z"/></svg>
 <div class="btn" style="left:16px;top:998px;width:130px"><span style="letter-spacing:-0.025px">Add alarm rule</span></div>
</div>
<!--/DRAWER-->
<div id="ov" class="abs"></div>
<!--DIALOG-->
<div id="dlg" class="abs">
 <div id="dlgh" class="abs">
  <div class="t b" style="letter-spacing:-0.454px;left:16.300px;top:16px;line-height:32px;font-size:20px">Edit alarm rule condition</div>
  <svg class="ic" style="left:856px;top:20px;width:24px;height:24px" viewBox="0 0 24 24"><path d="M19 6.410L17.590 5 12 10.590 6.410 5 5 6.410 10.590 12 5 17.590 6.410 19 12 13.410 17.590 19 19 17.590 13.410 12z"/></svg>
 </div>
 <!-- panel 1 -->
 <div class="pan" style="top:88px;height:202px"></div>
 <div class="t md" style="letter-spacing:0.583px;left:48.400px;top:109px;line-height:20px;font-size:14px">Key filters</div>
 <svg class="ic g" style="left:836px;top:106.300px;width:24px;height:24px" viewBox="0 0 24 24"><path d="M12 8l-6 6 1.410 1.410L12 10.830l4.590 4.580L18 14z"/></svg>
 <div class="t g" style="letter-spacing:-0.035px;left:112.300px;top:151.600px;line-height:20px;font-size:13px">Key name</div>
 <div class="t g" style="letter-spacing:-0.056px;left:442.400px;top:151.600px;line-height:20px;font-size:13px">Key type</div>
 <div class="hl" style="left:48px;top:172px;width:804px"></div>
 <div class="t g" style="letter-spacing:0.156px;left:112.300px;top:185.700px;line-height:20px;font-size:14px">batteryLevel</div>
 <div class="t g" style="letter-spacing:0.197px;left:434.900px;top:185.700px;line-height:20px;font-size:14px">Time series</div>
 <svg class="ic" style="left:768px;top:184.700px;width:24px;height:24px;color:#00695c" viewBox="0 0 24 24"><path d="M3 17.250V21h3.750L17.810 9.940l-3.750-3.750L3 17.250zM20.710 7.040c.390-.390.390-1.020 0-1.410l-2.340-2.340c-.390-.390-1.020-.390-1.410 0l-1.830 1.830 3.750 3.750 1.830-1.830z"/></svg>
 <svg class="ic" style="left:816px;top:185px;width:24px;height:24px;color:#00695c" viewBox="0 0 24 24"><path d="M19 6.410L17.590 5 12 10.590 6.410 5 5 6.410 10.590 12 5 17.590 6.410 19 12 13.410 17.590 19 19 17.590 13.410 12z"/></svg>
 <div class="hl" style="left:112px;top:221px;width:740px"></div>
 <div class="btn" style="left:48px;top:238px;width:121px"><span style="letter-spacing:0.007px">Add key filter</span></div>
 <!-- panel 2 -->
 <div class="pan" style="top:306px;height:123px"></div>
 <div class="t md" style="letter-spacing:0.488px;left:48.300px;top:327px;line-height:20px;font-size:14px">Filter preview</div>
 <svg class="ic g" style="left:836px;top:324.300px;width:24px;height:24px" viewBox="0 0 24 24"><path d="M12 8l-6 6 1.410 1.410L12 10.830l4.590 4.580L18 14z"/></svg>
 <div class="abs" style="left:48px;top:370px;width:804px;height:43px;border:1px solid rgba(0,0,0,.22);border-radius:4px"></div>
 <div class="chip" style="left:61px;top:381.500px;width:91px;color:#305680"><span style="letter-spacing:-0.180px">batteryLevel</span></div>
 <div class="t g" style="letter-spacing:-0.019px;left:156px;top:382px;line-height:20px;font-size:13px">greater or equal</div>
 <div class="chip" style="left:252.200px;top:381.500px;width:104.300px;color:#1298a0"><span style="letter-spacing:-0.265px">Current device</span></div>
 <div class="t g" style="left:358px;top:383px;line-height:20px;font-size:13px">.</div>
 <div class="chip" style="left:361.100px;top:381.500px;width:89.700px;color:#1298a0"><span style="letter-spacing:-0.403px">Low_Battery</span></div>
 <!-- condition type -->
 <div class="fld" style="left:24px;top:445px;width:852px;height:56px;background:#eff5f5;border-bottom-color:rgba(0,0,0,.45)"></div>
 <div class="t" style="letter-spacing:0.375px;left:40.400px;top:451.600px;line-height:16px;font-size:12px;color:rgba(0,0,0,.6)">Condition type</div>
 <div class="t" style="letter-spacing:0.419px;left:40.400px;top:469px;line-height:24px;font-size:16px">Simple</div>
 <svg class="abs" style="left:850px;top:470.500px" width="10" height="5" viewBox="0 0 10 5"><path d="M0 0h10L5 5z" fill="rgba(0,0,0,.54)"/></svg>
 <!-- buttons -->
 <div class="abs b" style="left:756px;top:556px;width:64px;height:36px;line-height:36px;border-radius:4px;background:#f2f7f7;color:#00695c;font-size:14px;text-align:center;white-space:nowrap"><span style="letter-spacing:-0.304px">Cancel</span></div>
 <div class="btn" style="left:828px;top:556px;width:64px"><span style="letter-spacing:-0.368px">Save</span></div>
</div>
<!--/DIALOG-->
<!--ANNOT-->
<svg class="abs" style="left:0;top:0;z-index:12;pointer-events:none" width="1838" height="1306" viewBox="0 0 1838 1306">
 <polygon points="1098,858.300 1262.300,888.200 1262,883 1284.500,897 1257.500,903 1259.500,897.300 1098,859.700" fill="#f94c50"/>
 <rect x="1286" y="897" width="84" height="55" rx="1.500" fill="none" stroke="#f94c50" stroke-width="4"/>
</svg>
<div class="abs" style="left:0;top:0;width:8px;height:8px;z-index:13;background:radial-gradient(circle at 8px 8px,rgba(85,87,90,0) 7px,#55575a 8px)"></div>
<div class="abs" style="left:1830px;top:0;width:8px;height:8px;z-index:13;background:radial-gradient(circle at 0 8px,rgba(85,87,90,0) 7px,#55575a 8px)"></div>
<div class="abs" style="left:0;top:1298px;width:8px;height:8px;z-index:13;background:radial-gradient(circle at 8px 0,rgba(85,87,90,0) 7px,#55575a 8px)"></div>
<div class="abs" style="left:1830px;top:1298px;width:8px;height:8px;z-index:13;background:radial-gradient(circle at 0 0,rgba(85,87,90,0) 7px,#55575a 8px)"></div>
<!--/ANNOT-->
</body></html>
